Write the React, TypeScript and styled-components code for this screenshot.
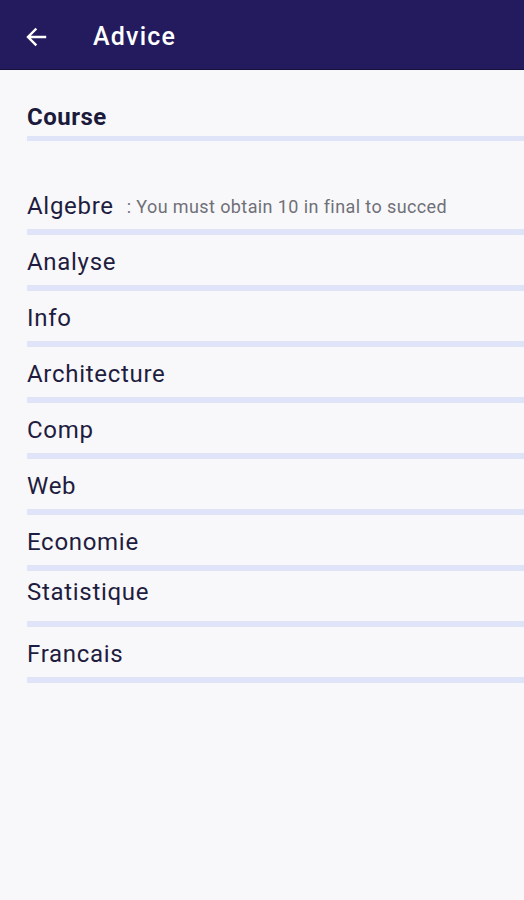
import styled, { createGlobalStyle } from 'styled-components';

const GlobalStyle = createGlobalStyle`
  html, body {
    margin: 0;
    padding: 0;
    background: #f8f8fa;
    font-family: Roboto, "Noto Sans", Arial, sans-serif;
  }
`;

type Course = {
  name: string;
  advice?: string;
  raised?: boolean;
};

const COURSES: Course[] = [
  { name: 'Algebre', advice: ': You must obtain 10 in final to succed' },
  { name: 'Analyse' },
  { name: 'Info' },
  { name: 'Architecture' },
  { name: 'Comp' },
  { name: 'Web' },
  { name: 'Economie' },
  { name: 'Statistique', raised: true },
  { name: 'Francais' },
];

const Page = styled.div`
  width: 524px;
  min-height: 900px;
  background: #f8f8fa;
`;

const Toolbar = styled.header`
  display: flex;
  align-items: center;
  height: 70px;
  box-sizing: border-box;
  padding: 4px 0 0 24px;
  background: #231b5e;
  border-bottom: 1px solid #16103f;
`;

const BackButton = styled.button`
  display: flex;
  align-items: center;
  justify-content: center;
  width: 24px;
  height: 24px;
  padding: 0;
  margin: 0 45px 0 0;
  border: none;
  background: none;
  color: #ffffff;
  cursor: pointer;
`;

const Title = styled.h1`
  margin: 0;
  font-size: 25px;
  font-weight: 500;
  color: #ffffff;
  letter-spacing: 1.2px;
`;

const Content = styled.main`
  padding: 0 0 0 27px;
`;

const Heading = styled.div`
  padding: 33px 0 5px;
  font-size: 24px;
  line-height: 28px;
  font-weight: 700;
  letter-spacing: 0.5px;
  color: #1b1a3b;
`;

const Divider = styled.div<{ $thick?: boolean }>`
  height: ${({ $thick }) => ($thick ? 6 : 5)}px;
  background: #dfe4f8;
`;

const List = styled.ul`
  list-style: none;
  margin: 38px 0 0;
  padding: 0;
`;

const Row = styled.li<{ $raised?: boolean }>`
  display: flex;
  align-items: center;
  height: 28px;
  padding: ${({ $raised }) => ($raised ? '7px 0 15px' : '13px 0 9px')};
`;

const Name = styled.span`
  font-size: 24px;
  line-height: 28px;
  letter-spacing: 0.7px;
  color: #1f1d3f;
`;

const Advice = styled.span`
  margin-left: 13px;
  font-size: 18px;
  letter-spacing: 0.4px;
  color: #707078;
`;

function ArrowLeft() {
  return (
    <svg width="24" height="24" viewBox="0 0 24 24" fill="none">
      <path
        d="M21 12H4.5M11.5 4.5 4 12l7.5 7.5"
        stroke="currentColor"
        strokeWidth="2.4"
        strokeLinecap="square"
      />
    </svg>
  );
}

export default function App() {
  return (
    <Page>
      <GlobalStyle />
      <Toolbar>
        <BackButton aria-label="Back">
          <ArrowLeft />
        </BackButton>
        <Title>Advice</Title>
      </Toolbar>
      <Content>
        <Heading>Course</Heading>
        <Divider />
        <List>
          {COURSES.map((course) => (
            <div key={course.name}>
              <Row $raised={course.raised}>
                <Name>{course.name}</Name>
                {course.advice && <Advice>{course.advice}</Advice>}
              </Row>
              <Divider $thick />
            </div>
          ))}
        </List>
      </Content>
    </Page>
  );
}
